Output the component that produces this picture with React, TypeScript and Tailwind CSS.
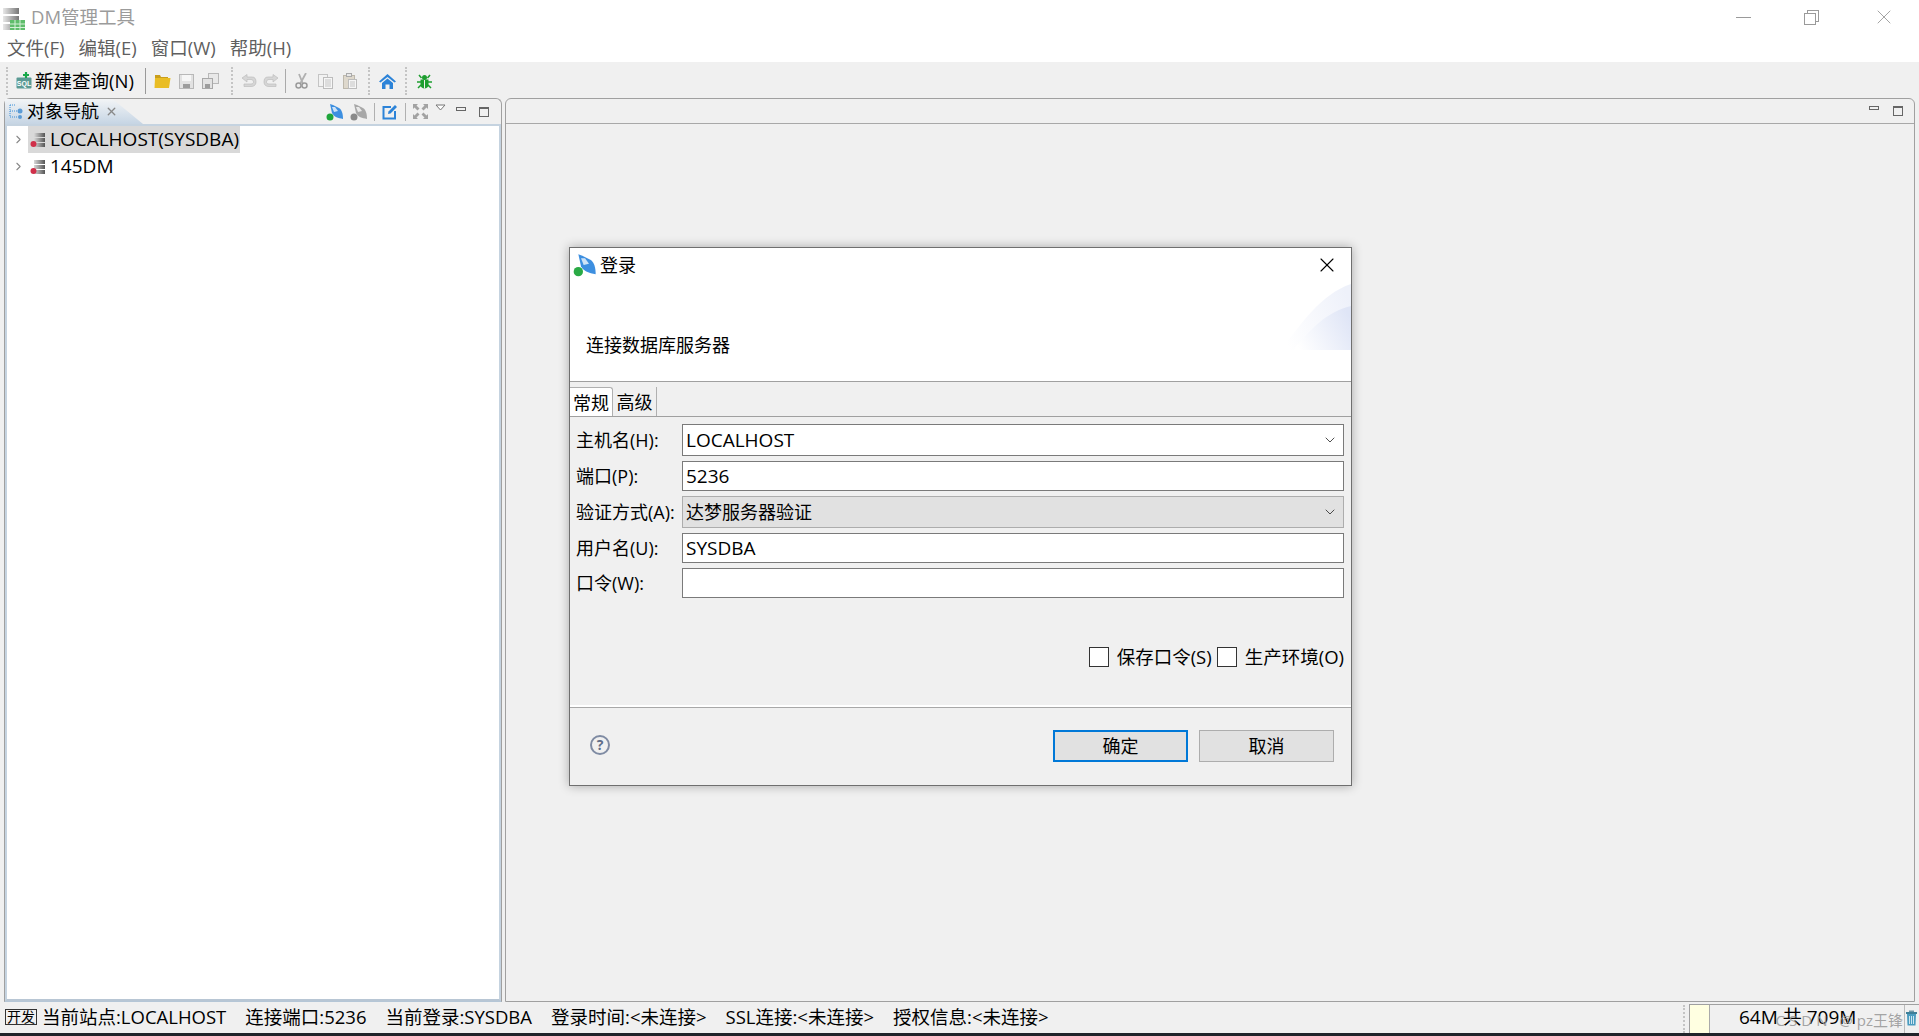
import { X, ChevronDown, ChevronRight } from 'lucide-react';

const font = "font-['Open_Sans','Noto_Sans_CJK_SC',sans-serif]";

function Grip() {
  return <div className="h-[28px] w-[3px] mx-[3px] border-l-2 border-dotted border-[#c4c4c4]" />;
}

function ServerIcon({ className = '' }: { className?: string }) {
  return (
    <svg width="16" height="16" viewBox="0 0 16 16" className={className}>
      <defs>
        <linearGradient id="srv" x1="0" x2="1">
          <stop offset="0" stopColor="#d8d8d8" />
          <stop offset="1" stopColor="#555" />
        </linearGradient>
      </defs>
      <rect x="4" y="1" width="11" height="4" fill="url(#srv)" />
      <rect x="4" y="6" width="11" height="4" fill="url(#srv)" />
      <rect x="4" y="11" width="11" height="4" fill="url(#srv)" />
      <circle cx="3.5" cy="12" r="3" fill="#d0304a" />
    </svg>
  );
}

function PlugIcon({ color, dot, size = 18 }: { color: string; dot: string; size?: number }) {
  return (
    <svg width={size} height={size} viewBox="0 0 18 18">
      <path d="M4 1 L7 2 L13 5 C16 7 17 11 17 16 C12 15 8 14 6 10 Z" fill={color} />
      <path d="M6 4 L9 4 L12 8 L8 9 Z" fill="#fff" opacity="0.75" />
      <circle cx="4" cy="14" r="3.5" fill={dot} />
    </svg>
  );
}

function AppIcon() {
  return (
    <svg width="26" height="26" viewBox="0 0 26 26">
      <defs>
        <linearGradient id="app" x1="0" x2="1">
          <stop offset="0" stopColor="#e8e8e8" />
          <stop offset="1" stopColor="#777" />
        </linearGradient>
      </defs>
      <rect x="3" y="4" width="16" height="6" fill="url(#app)" />
      <rect x="3" y="12" width="16" height="6" fill="url(#app)" />
      <rect x="3" y="20" width="16" height="6" fill="url(#app)" />
      <rect x="10" y="16" width="15" height="11" fill="#5fbd6b" />
      <path d="M10 20h15M10 23.500h15M15 16v11M20 16v11" stroke="#d5f0d8" strokeWidth="1" />
    </svg>
  );
}

function NewSqlIcon() {
  return (
    <svg width="16" height="18" viewBox="0 0 16 18">
      <rect x="0.500" y="5.500" width="15" height="11" rx="1" fill="#5b9a94" />
      <text x="8" y="14" textAnchor="middle" fontSize="7" fontWeight="700" fill="#fff" fontFamily="Liberation Sans">SQL</text>
      <path d="M10 0v6M7 3h6" stroke="#18a84a" strokeWidth="2.200" />
    </svg>
  );
}

function FolderIcon() {
  return (
    <svg width="17" height="16" viewBox="0 0 17 16">
      <path d="M1 2h5l1 2h7v2H1Z" fill="#c99e1c" />
      <path d="M0.500 15 L1 5 H16.500 L15 15 Z" fill="#e9bd25" />
    </svg>
  );
}

function SaveIcon() {
  return (
    <svg width="15" height="15" viewBox="0 0 15 15">
      <rect x="0.500" y="0.500" width="14" height="14" fill="#e2e2e2" stroke="#b8b8b8" />
      <rect x="3" y="1" width="9" height="6" fill="#f6f6f6" />
      <rect x="4" y="10" width="7" height="4" fill="#9c9c9c" />
    </svg>
  );
}

function SaveAllIcon() {
  return (
    <svg width="17" height="16" viewBox="0 0 17 16">
      <rect x="6.500" y="0.500" width="10" height="10" fill="#e8e8e8" stroke="#b8b8b8" />
      <rect x="0.500" y="5.500" width="10" height="10" fill="#e2e2e2" stroke="#a8a8a8" />
      <rect x="3" y="11" width="5" height="4" fill="#9c9c9c" />
    </svg>
  );
}

function UndoIcon({ flip = false }: { flip?: boolean }) {
  return (
    <svg width="16" height="15" viewBox="0 0 16 15" className={flip ? '-scale-x-100' : ''}>
      <path d="M1 4 L6 0.500 V3 H11 C14 3 15 5 15 8 C15 11 13 12.500 10 12.500 H3 V10 H10 C12 10 12.500 9 12.500 8 C12.500 6.500 11.500 5.500 10 5.500 H6 V8 Z" fill="#d6d6d6" stroke="#bdbdbd" strokeWidth="0.700" />
    </svg>
  );
}

function CutIcon() {
  return (
    <svg width="13" height="16" viewBox="0 0 13 16">
      <path d="M11 0 L5 11 M4 1 L8 11" stroke="#b0b0b0" strokeWidth="1.800" />
      <circle cx="3.500" cy="12.500" r="2.500" fill="none" stroke="#9a9a9a" strokeWidth="1.500" />
      <circle cx="9.500" cy="12.500" r="2.500" fill="none" stroke="#9a9a9a" strokeWidth="1.500" />
    </svg>
  );
}

function CopyIcon() {
  return (
    <svg width="15" height="15" viewBox="0 0 15 15">
      <rect x="0.500" y="0.500" width="9" height="12" fill="#f2f2f2" stroke="#c4c4c4" />
      <rect x="5.500" y="3.500" width="9" height="11" fill="#f6f6f6" stroke="#bcbcbc" />
      <path d="M7 6h6M7 8h6M7 10h6M7 12h6" stroke="#c4c4c4" />
    </svg>
  );
}

function PasteIcon() {
  return (
    <svg width="14" height="16" viewBox="0 0 14 16">
      <rect x="0.500" y="2.500" width="11" height="13" fill="#ded8cc" stroke="#bdb8ac" />
      <rect x="3.500" y="0.500" width="5" height="3" fill="#e8e8e8" stroke="#aaa" />
      <rect x="5.500" y="6.500" width="8" height="9" fill="#f6f6f6" stroke="#bcbcbc" />
      <path d="M7 9h5M7 11h5M7 13h5" stroke="#c4c4c4" />
    </svg>
  );
}

function HomeIcon() {
  return (
    <svg width="17" height="15" viewBox="0 0 17 15">
      <path d="M8.500 0 L17 7.500 L15.500 8.500 L8.500 3 L1.500 8.500 L0 7.500 Z" fill="#2c83d8" />
      <path d="M3 9 L8.500 4.500 L14 9 V15 H10.500 V10.500 H6.500 V15 H3 Z" fill="#2c83d8" />
    </svg>
  );
}

function BugIcon() {
  return (
    <svg width="15" height="15" viewBox="0 0 15 15">
      <path d="M2 1 L4.500 4 M13 1 L10.500 4 M0 8h15M1 14 L4 11 M14 14 L11 11" stroke="#1d9e2f" strokeWidth="1.500" />
      <circle cx="7.500" cy="3.500" r="2.500" fill="#1d9e2f" />
      <path d="M3.500 5.500 H11.500 V11 C11.500 13 9.500 14.500 7.500 14.500 C5.500 14.500 3.500 13 3.500 11 Z" fill="#1d9e2f" />
      <path d="M7.500 6v8.500" stroke="#f0f0f0" />
    </svg>
  );
}

function NavIcon() {
  return (
    <svg width="15" height="15" viewBox="0 0 15 15">
      <path d="M1 1h5M1 1v12M1 7h8M1 13h8" stroke="#3a8fd8" strokeDasharray="1 1" fill="none" />
      <circle cx="11" cy="7" r="2.500" fill="#5b9bd5" />
      <circle cx="11" cy="13" r="2" fill="#5b9bd5" />
    </svg>
  );
}

function EditIcon() {
  return (
    <svg width="16" height="16" viewBox="0 0 16 16">
      <path d="M9 3 H1.500 V14.500 H13 V7" fill="none" stroke="#2c83d8" strokeWidth="2" />
      <path d="M6 10 L6.500 7.500 L13 1 L15 3 L8.500 9.500 Z" fill="#2c83d8" />
    </svg>
  );
}

function ExpandIcon() {
  return (
    <svg width="15" height="15" viewBox="0 0 15 15" fill="#a2a2a2">
      <path d="M0 0h5L3.500 1.500 6.500 4.500 4.500 6.500 1.500 3.500 0 5Z" />
      <path d="M15 0v5L13.500 3.500 10.500 6.500 8.500 4.500 11.500 1.500 10 0Z" />
      <path d="M0 15v-5L1.500 11.500 4.500 8.500 6.500 10.500 3.500 13.500 5 15Z" />
      <path d="M15 15h-5L11.500 13.500 8.500 10.500 10.500 8.500 13.500 11.500 15 10Z" />
    </svg>
  );
}

function TrashIcon() {
  return (
    <svg width="13" height="16" viewBox="0 0 13 16">
      <rect x="4" y="0.500" width="5" height="2" fill="#6f98a8" />
      <rect x="1" y="2" width="11" height="2" fill="#3e7f98" />
      <path d="M2 4h9l-.5 11.500h-8Z" fill="#4a9cc0" />
      <path d="M4.500 6v8M6.500 6v8M8.500 6v8" stroke="#cfe6ef" />
    </svg>
  );
}

function Field({ label, value, select, disabled, tall }: { label: string; value?: string; select?: boolean; disabled?: boolean; tall?: boolean }) {
  return (
    <div className={`flex items-center ${tall ? 'h-[32px]' : 'h-[30px]'}`}>
      <span className="w-[112px] pl-[6px] text-[18px] whitespace-nowrap">{label}</span>
      <div
        className={`relative h-full w-[662px] border px-[3px] flex items-center ${disabled ? 'bg-[#e1e1e1] border-[#adadad] text-[18px]' : 'bg-white border-[#7a7a7a] text-[19px]'}`}
      >
        {value}
        {select && <ChevronDown className="absolute right-[5px] top-[7px] text-[#333]" size={16} strokeWidth={1.300} />}
      </div>
    </div>
  );
}

export default function App() {
  return (
    <div className={`relative h-[1036px] w-[1919px] overflow-hidden flex flex-col bg-[#f0f0f0] text-black ${font}`}>
      {/* title + menu */}
      <div className="h-[62px] bg-white shrink-0">
        <div className="h-[34px] flex items-center">
          <AppIcon />
          <span className="ml-[5px] text-[18.500px] text-[#9b9b9b]">DM管理工具</span>
          <div className="ml-auto flex items-center text-[#9a9a9a]">
            <div className="w-[15px] h-px bg-[#9a9a9a] mr-[53px]" />
            <div className="relative w-[15px] h-[15px] mr-[53px]">
              <div className="absolute right-0 top-0 w-[12px] h-[12px] border border-[#9a9a9a]" />
              <div className="absolute left-0 bottom-0 w-[12px] h-[12px] border border-[#9a9a9a] bg-white" />
            </div>
            <X size={24} strokeWidth={0.900} className="mr-[23px]" />
          </div>
        </div>
        <div className="h-[28px] flex items-center gap-[14px] pl-[7px] text-[18.500px] text-[#5f5f5f] leading-none">
          <span>文件(F)</span>
          <span>编辑(E)</span>
          <span>窗口(W)</span>
          <span>帮助(H)</span>
        </div>
      </div>

      {/* toolbar */}
      <div className="h-[36px] flex items-center pl-[3px] pt-[2px] shrink-0">
        <Grip />
        <div className="ml-[4px] flex items-center gap-[3px] text-[18.500px] whitespace-nowrap">
          <NewSqlIcon />
          <span>新建查询(N)</span>
        </div>
        <div className="ml-[11px] w-px h-[26px] bg-[#999]" />
        <div className="ml-[8px] flex items-center gap-[8px]">
          <FolderIcon />
          <SaveIcon />
          <SaveAllIcon />
        </div>
        <div className="ml-[9px]"><Grip /></div>
        <div className="ml-[4px] flex items-center gap-[6px]">
          <UndoIcon />
          <UndoIcon flip />
          <div className="w-px h-[24px] bg-[#aaa]" />
        </div>
        <div className="ml-[9px] flex items-center gap-[10px]">
          <CutIcon />
          <CopyIcon />
          <PasteIcon />
        </div>
        <div className="ml-[8px]"><Grip /></div>
        <div className="ml-[5px]"><HomeIcon /></div>
        <div className="ml-[6px]"><Grip /></div>
        <div className="ml-[6px]"><BugIcon /></div>
      </div>

      {/* panels */}
      <div className="flex-1 flex min-h-0 pl-[4px] pr-[4px] gap-[3px]">
        <div className="w-[498px] flex flex-col border border-[#a0a0a0] border-b-[#b5c6d6] rounded-t-[6px]">
          <div className="h-[25px] flex items-center relative shrink-0">
            <div className="h-full w-[138px] flex items-center pl-[4px] bg-gradient-to-b from-[#f2f4f6] to-[#c6d5e4] [clip-path:polygon(0_0,78%_0,100%_100%,0_100%)]">
              <NavIcon />
              <span className="ml-[3px] text-[18px] whitespace-nowrap">对象导航</span>
              <X size={13} strokeWidth={2.500} className="ml-[6px] text-[#888]" />
            </div>
            <div className="ml-auto flex items-center pr-[12px]">
              <PlugIcon color="#3d8fe0" dot="#1ea53a" />
              <div className="ml-[6px]"><PlugIcon color="#a8a8a8" dot="#8a8a8a" /></div>
              <div className="ml-[6px] w-px h-[18px] bg-[#b0b0b0]" />
              <div className="ml-[7px]"><EditIcon /></div>
              <div className="ml-[7px] w-px h-[18px] bg-[#b0b0b0]" />
              <div className="ml-[7px]"><ExpandIcon /></div>
              <svg width="11" height="7" viewBox="0 0 11 7" className="ml-[7px] mb-[8px]">
                <path d="M1 1h9L5.500 6Z" fill="#fff" stroke="#777" />
              </svg>
              <div className="ml-[10px] mb-[6px] w-[10px] h-[4px] border border-[#666]" />
              <div className="ml-[13px] w-[10px] h-[10px] border border-[#666] border-t-2" />
            </div>
          </div>
          <div className="flex-1 bg-white border-x-2 border-y-2 border-[#c5d3e0] border-b-[#b8c6d4] text-[19px] pl-[3px]">
            <div className="h-[27px] flex items-center">
              <ChevronRight size={13} strokeWidth={2} className="text-[#888] ml-[2px]" />
              <div className="ml-[3px] h-full flex items-center bg-[#d9d9d9] pl-[2px] pr-[1px]">
                <ServerIcon />
                <span className="ml-[4px] whitespace-nowrap">LOCALHOST(SYSDBA)</span>
              </div>
            </div>
            <div className="h-[27px] flex items-center">
              <ChevronRight size={13} strokeWidth={2} className="text-[#888] ml-[2px]" />
              <div className="ml-[5px] flex items-center">
                <ServerIcon />
                <span className="ml-[4px]">145DM</span>
              </div>
            </div>
          </div>
        </div>

        <div className="flex-1 flex flex-col border border-[#a0a0a0] rounded-t-[6px]">
          <div className="h-[25px] flex items-center justify-end border-b border-[#a8a8a8] pr-[11px] gap-[14px]">
            <div className="mb-[6px] w-[10px] h-[4px] border border-[#666]" />
            <div className="w-[10px] h-[10px] border border-[#666] border-t-2" />
          </div>
          <div className="flex-1" />
        </div>
      </div>

      {/* status bar */}
      <div className="h-[31px] shrink-0 flex items-center pl-[5px] text-[18.500px] whitespace-nowrap">
        <span className="border border-[#333] text-[14px] h-[16px] w-[32px] leading-[14px] text-center mr-[5px] mb-[2px]">开发</span>
        <div className="flex items-center gap-[19px] pb-[2px]">
          <span>当前站点:LOCALHOST</span>
          <span>连接端口:5236</span>
          <span>当前登录:SYSDBA</span>
          <span>登录时间:&lt;未连接&gt;</span>
          <span>SSL连接:&lt;未连接&gt;</span>
          <span>授权信息:&lt;未连接&gt;</span>
        </div>
        <div className="ml-auto flex items-center h-full pt-[2px]">
          <Grip />
          <div className="relative w-[230px] h-full border-t border-l border-[#a0a0a0] flex items-center">
            <div className="w-[20px] h-full bg-[#ffffe1] border-r border-[#aaa]" />
            <span className="ml-[29px] text-[19px] pb-[3px]">64M 共 709M</span>
            <div className="absolute right-[14px] top-0 h-full w-px bg-[#bbb]" />
            <div className="absolute right-[1px] top-[5px]"><TrashIcon /></div>
          </div>
        </div>
      </div>
      <div className="h-[3px] bg-[#20242a] shrink-0" />
      <span className="absolute right-[16px] bottom-[5px] text-[15px] text-[#9a9a9a]/90 whitespace-nowrap"><span className="tracking-[4px]">CSDN @</span>pz王锋</span>

      {/* login dialog */}
      <div className="absolute left-[569px] top-[247px] w-[783px] h-[539px] border border-[#6f6f6f] bg-[#f0f0f0] shadow-[0_0_10px_rgba(0,0,0,0.3)] flex flex-col">
        <div className="relative h-[134px] bg-white border-b border-[#a0a0a0] shrink-0 overflow-hidden">
          <div className="absolute left-[3px] top-[5px]"><PlugIcon color="#3d8fe0" dot="#2aaa45" size={24} /></div>
          <span className="absolute left-[30px] top-[4px] text-[18px]">登录</span>
          <X size={24} strokeWidth={1.100} className="absolute right-[12px] top-[5px]" />
          <span className="absolute left-[16px] top-[84px] text-[18px]">连接数据库服务器</span>
          <svg width="80" height="70" viewBox="0 0 80 70" className="absolute right-0 top-[36px]">
            <defs>
              <linearGradient id="wave" x1="0" x2="1" y1="0.700" y2="0.300">
                <stop offset="0" stopColor="#fff" />
                <stop offset="1" stopColor="#dfe5f6" />
              </linearGradient>
              <linearGradient id="waveBack" x1="0" x2="1" y1="0.700" y2="0.300">
                <stop offset="0" stopColor="#fff" />
                <stop offset="1" stopColor="#eef1fa" />
              </linearGradient>
            </defs>
            <path d="M10 66 C30 40 50 10 80 0 V66 Z" fill="url(#waveBack)" />
            <path d="M22 66 C40 45 55 28 80 22 V66 Z" fill="url(#wave)" />
          </svg>
        </div>
        <div className="flex items-end h-[35px] pt-[6px] border-b border-[#a0a0a0] shrink-0 text-[18px]">
          <div className="h-[29px] w-[43px] bg-white border-t border-r border-[#b0b0b0] rounded-tr-[3px] text-center leading-[30px]">常规</div>
          <div className="h-[29px] w-[44px] border-r border-[#b0b0b0] text-center leading-[30px]">高级</div>
        </div>
        <div className="flex flex-col gap-[5px] pt-[7px] shrink-0">
          <Field label="主机名(H):" value="LOCALHOST" select tall />
          <Field label="端口(P):" value="5236" />
          <Field label="验证方式(A):" value="达梦服务器验证" select disabled tall />
          <Field label="用户名(U):" value="SYSDBA" />
          <Field label="口令(W):" />
        </div>
        <div className="mt-[45px] flex items-center justify-end pr-[7px] text-[18.500px] whitespace-nowrap">
          <div className="w-[20px] h-[20px] bg-white border border-[#333] mr-[8px]" />
          <span>保存口令(S)</span>
          <div className="ml-[5px] w-[20px] h-[20px] bg-white border border-[#333] mr-[8px]" />
          <span>生产环境(O)</span>
        </div>
        <div className="mt-[34px] border-t-2 border-white" />
        <div className="border-t border-[#a8a8a8]" />
        <div className="flex-1 flex items-center pl-[20px] pr-[17px]">
          <div className="w-[20px] h-[20px] mb-[2px] rounded-full border-2 border-[#7f8ba3] text-[#5f6d88] text-[14px] font-bold leading-[16px] text-center">?</div>
          <button className="ml-auto w-[135px] h-[32px] bg-[#e1e1e1] border-2 border-[#0078d7] text-[18px]">确定</button>
          <button className="ml-[11px] w-[135px] h-[32px] bg-[#e1e1e1] border border-[#adadad] text-[18px]">取消</button>
        </div>
      </div>
    </div>
  );
}
